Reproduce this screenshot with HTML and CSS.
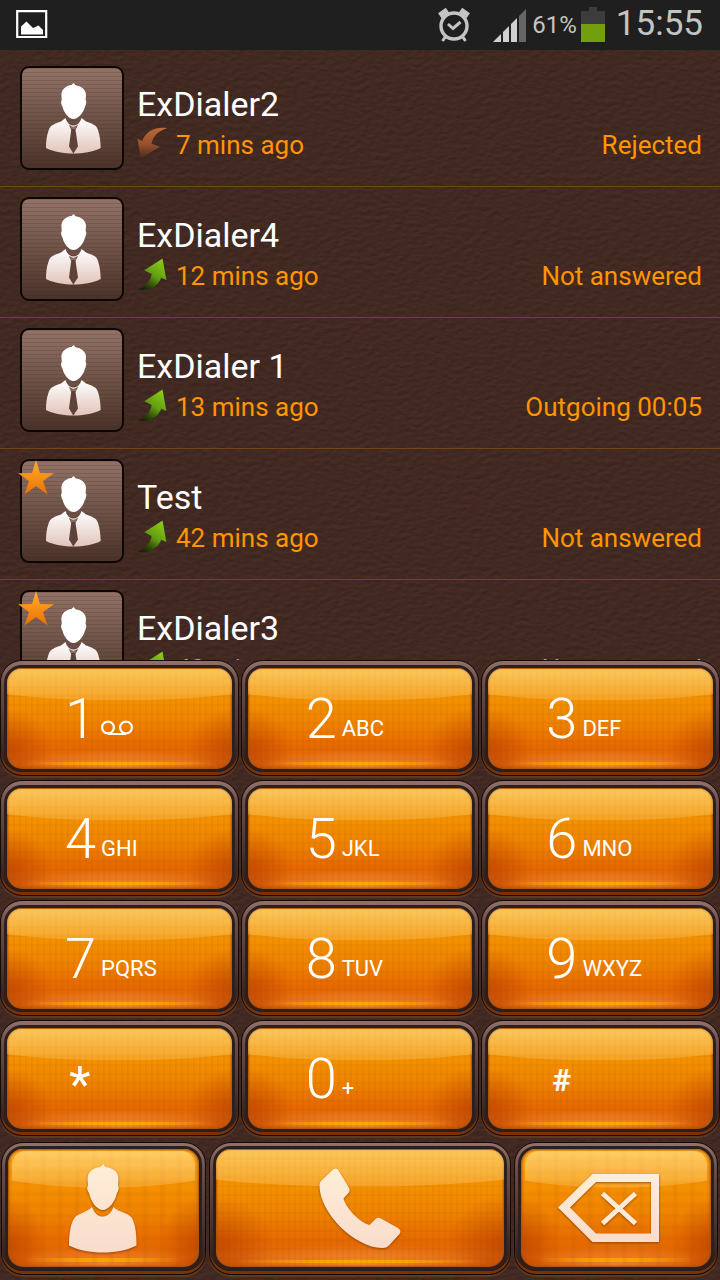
FILE: index.html
```html
<!DOCTYPE html>
<html lang="en">
<head>
<meta charset="utf-8">
<meta name="viewport" content="width=device-width, initial-scale=1">
<title>ExDialer</title>
<link rel="stylesheet" href="styles.css">
</head>
<body>
<svg class="defs" aria-hidden="true">
  <defs>
    <linearGradient id="gShirt" x1="0" y1="0" x2="0" y2="1"><stop offset="0" stop-color="#fff"/><stop offset=".5" stop-color="#fff"/><stop offset="1" stop-color="#e2c4ba"/></linearGradient>
    <linearGradient id="gGreen" x1=".8" y1="0" x2=".2" y2="1"><stop offset="0" stop-color="#8ccc18"/><stop offset=".5" stop-color="#629c12"/><stop offset=".8" stop-color="#2c480a"/><stop offset="1" stop-color="#162006"/></linearGradient>
    <linearGradient id="gRust" x1="0" y1="0" x2="0" y2="1"><stop offset="0" stop-color="#c0683a"/><stop offset=".55" stop-color="#94502c"/><stop offset="1" stop-color="#4e2a1c"/></linearGradient>
    <linearGradient id="gStar" x1="0" y1="0" x2="0" y2="1"><stop offset="0" stop-color="#ffb030"/><stop offset="1" stop-color="#ec7000"/></linearGradient>
    <linearGradient id="gCream" x1="0" y1="0" x2="0" y2="1"><stop offset="0" stop-color="#feeed8"/><stop offset="1" stop-color="#f9dccb"/></linearGradient>
    <symbol id="person" viewBox="0 0 104 104">
      <path fill="url(#gShirt)" d="M53.600 17 L55.500 19.300 C61 20 66 23.500 66 29 L65.600 34 C67 35 66 39 65 40.500 C63.500 47 58 53 53.500 53 C49 53 43.800 47 42.500 40.500 C41.200 39 40.500 35 41.800 34 L41.400 29 C41.300 23.500 46 19.500 51.500 19 Z M45.500 52 C47 57 50 59.500 53.500 59.500 C57 59.500 60 57 61.500 52 L66 55.500 C72 58 76.500 58.500 78 64 C80 70 80.500 76 80.700 82 C73 86 63 87.500 53.500 87.500 C44 87.500 34 86 26 82 C26 76 26.500 70 28.700 64 C30.500 58.500 35 58 41 55.500 Z"/>
      <path fill="#5c4238" d="M49 59 L53.300 61 L58 59 L55.500 64 L58 80.500 L53.300 87.500 L49 80.500 L51.200 64 Z"/>
      <path fill="none" stroke="#c9b2aa" stroke-width=".8" d="M50.500 60 H56.500 M50.500 62 H56"/>
    </symbol>
    <symbol id="outgoing" viewBox="0 0 31 34"><path fill="url(#gGreen)" d="M25.500 1.500 L29.400 23 L24.300 20.700 C21 29 12 35 .5 32.300 C8 30.500 13 25 14.700 17 L7.300 13.200 Z"/></symbol>
    <symbol id="incoming" viewBox="0 0 31 34"><path fill="url(#gRust)" d="M4 32.300 L.3 12.500 L5.200 15 C9 5 19 .5 30.300 2.200 C22 4.500 16.500 9 14.500 17.800 L23 20.800 Z"/></symbol>
    <symbol id="star" viewBox="0 0 36 35"><path fill="url(#gStar)" d="M18 0 L22 13 L36 13.200 L25 21 L29.500 34.500 L18 26 L6.500 34.500 L11 21 L0 13.200 L14 13 Z"/></symbol>
  </defs>
</svg>

<div class="screen">
  <header class="status">
    <svg class="status-picture" width="32" height="30" viewBox="0 0 32 30"><path fill="none" stroke="#fff" stroke-width="2.200" d="M1.200 2.200H30.200V28H1.200Z"/><path fill="#fff" d="M5 25.500V17.500L10.500 12.500L17 19L22.500 16.500L27 21V25.500Z"/></svg>
    <svg class="alarm" width="34" height="36" viewBox="0 0 34 36"><g fill="none" stroke="#c4c4c4"><circle cx="17" cy="19" r="13" stroke-width="3.400"/><path stroke-width="3" d="M11 17L16 21.500L23.500 15"/><path stroke-width="6" d="M2.800 8.700L10.500 3.300M31.200 8.700L23.500 3.300"/><path stroke-width="3" d="M8.500 29.500L5.500 34M25.500 29.500L28.500 34"/></g></svg>
    <svg class="signal" width="34" height="34" viewBox="0 0 34 34"><path fill="#d0d0d0" d="M0 33L8 25V33ZM10 23L16 17V33H10ZM18 15L24 9V33H18Z"/><path fill="#666" d="M26 7L33 0V33H26Z"/></svg>
    <span class="percent">61%</span>
    <svg class="battery" width="24" height="35" viewBox="0 0 24 35"><path fill="#3c3c3c" d="M0 4H8V0H16V4H24V17H0Z"/><path fill="#749f0c" d="M0 17H24V35H0Z"/></svg>
    <time class="clock">15:55</time>
  </header>

  <main class="calls">
    <ul class="call-list">
      <li class="call">
        <div class="avatar"><svg class="avatar-pic"><use href="#person"/></svg></div>
        <div class="info"><div class="name">ExDialer2</div><div class="detail"><svg class="dir"><use href="#incoming"/></svg><span class="ago">7 mins ago</span><span class="result">Rejected</span></div></div>
      </li>
      <li class="call">
        <div class="avatar"><svg class="avatar-pic"><use href="#person"/></svg></div>
        <div class="info"><div class="name">ExDialer4</div><div class="detail"><svg class="dir"><use href="#outgoing"/></svg><span class="ago">12 mins ago</span><span class="result">Not answered</span></div></div>
      </li>
      <li class="call">
        <div class="avatar"><svg class="avatar-pic"><use href="#person"/></svg></div>
        <div class="info"><div class="name">ExDialer 1</div><div class="detail"><svg class="dir"><use href="#outgoing"/></svg><span class="ago">13 mins ago</span><span class="result">Outgoing 00:05</span></div></div>
      </li>
      <li class="call">
        <div class="avatar"><svg class="avatar-pic"><use href="#person"/></svg><svg class="fav"><use href="#star"/></svg></div>
        <div class="info"><div class="name">Test</div><div class="detail"><svg class="dir"><use href="#outgoing"/></svg><span class="ago">42 mins ago</span><span class="result">Not answered</span></div></div>
      </li>
      <li class="call">
        <div class="avatar"><svg class="avatar-pic"><use href="#person"/></svg><svg class="fav"><use href="#star"/></svg></div>
        <div class="info"><div class="name">ExDialer3</div><div class="detail"><svg class="dir"><use href="#outgoing"/></svg><span class="ago">42 mins ago</span><span class="result">Not answered</span></div></div>
      </li>
    </ul>
  </main>

  <section class="dialpad" aria-label="Dial pad">
    <div class="digits">
      <button class="key"><span class="face"><span class="digit">1</span><svg class="voicemail" width="32" height="36" viewBox="0 0 32 36" role="img" aria-label="Voicemail"><g fill="none" stroke="#fff" stroke-width="2.200"><circle cx="7" cy="18.500" r="5.900"/><circle cx="25" cy="18.500" r="5.900"/><path d="M7 25H25"/></g></svg></span></button>
      <button class="key"><span class="face"><span class="digit">2</span><span class="letters">ABC</span></span></button>
      <button class="key"><span class="face"><span class="digit">3</span><span class="letters">DEF</span></span></button>
      <button class="key"><span class="face"><span class="digit">4</span><span class="letters">GHI</span></span></button>
      <button class="key"><span class="face"><span class="digit">5</span><span class="letters">JKL</span></span></button>
      <button class="key"><span class="face"><span class="digit">6</span><span class="letters">MNO</span></span></button>
      <button class="key"><span class="face"><span class="digit">7</span><span class="letters">PQRS</span></span></button>
      <button class="key"><span class="face"><span class="digit">8</span><span class="letters">TUV</span></span></button>
      <button class="key"><span class="face"><span class="digit">9</span><span class="letters">WXYZ</span></span></button>
      <button class="key"><span class="face"><span class="asterisk">*</span></span></button>
      <button class="key"><span class="face"><span class="digit">0</span><span class="letters">+</span></span></button>
      <button class="key"><span class="face"><span class="hash">#</span></span></button>
    </div>
    <div class="actions">
      <button class="key action" aria-label="Contacts"><span class="face wide-grid">
        <svg class="glyph" width="70" height="90" viewBox="0 0 70 90"><path fill="url(#gCream)" d="M35.200 0 L37.500 3 C45 4 50.500 8 50.500 14.500 L50 22 C51.500 23 50.500 27 49 29 C47 38 40.500 46 34.800 46 C29 46 23 38 21 29 C19.500 27 18.500 23 20 22 L19.500 14.500 C19.500 8 25 4 32 3 Z M24 43 C27 50.500 30.500 52.500 34.500 52.500 C38.500 52.500 42.500 50.500 45.500 43 C52 49 59 48 64 54 C68 62 68.500 72 68.500 81.500 C60 86 48 88.500 35 88.500 C22 88.500 9.500 86 1 81.500 C1 72 2 60 6.500 54 C10 49 18 49 24 43 Z"/></svg>
      </span></button>
      <button class="key action" aria-label="Call"><span class="face">
        <svg class="glyph" width="82" height="88" viewBox="0 0 82 88"><path fill="url(#gCream)" d="M14.500 4 Q18 2.500 20 6 L30 23 Q31.500 26 29 28.500 L24.500 33.500 C27 43 40 57 50.500 60 L56.500 54 Q59 52 62 53.500 L79 63 Q83 65.500 80.500 69 L70 80.500 Q67.500 83.200 63 83 C36 83 0 48 .5 20 Q.5 17.500 2.500 15.500 Z"/></svg>
      </span></button>
      <button class="key action" aria-label="Delete"><span class="face wide-grid">
        <svg class="glyph delete" width="102" height="90" viewBox="0 0 102 90"><path fill="url(#gCream)" fill-rule="evenodd" d="M0 43.500 L34.500 10 H101 V78 H34.500 Z M12 43.500 L38 69.500 H93 V18 H38 Z"/><path fill="none" stroke="#fdebd6" stroke-width="5" d="M44.500 29.500 L77.500 59.500 M77.500 29.500 L44.500 59.500"/></svg>
      </span></button>
    </div>
  </section>
</div>
</body>
</html>
```
FILE: styles.css
```css
* { box-sizing: border-box; }

body {
  margin: 0;
  font-family: Roboto, "Noto Sans", sans-serif;
  background: #432a22;
}

.defs { position: absolute; width: 0; height: 0; }

.screen {
  display: flex;
  flex-direction: column;
  height: 100vh;
  overflow: hidden;
  background-color: #432a22;
  background-image: url("data:image/svg+xml,%3Csvg xmlns='http://www.w3.org/2000/svg' width='360' height='360'%3E%3Cfilter id='l' x='0' y='0' width='100%25' height='100%25' color-interpolation-filters='sRGB'%3E%3CfeTurbulence type='fractalNoise' baseFrequency='.14 .24' numOctaves='3' seed='4' stitchTiles='stitch' result='n'/%3E%3CfeDiffuseLighting in='n' surfaceScale='.55' diffuseConstant='1' lighting-color='rgb(77,49,40)'%3E%3CfeDistantLight azimuth='250' elevation='58'/%3E%3C/feDiffuseLighting%3E%3C/filter%3E%3Crect width='360' height='360' filter='url(%23l)'/%3E%3C/svg%3E");
}

/* status bar */
.status {
  display: flex;
  align-items: flex-start;
  justify-content: flex-end;
  flex: none;
  height: 50px;
  padding: 7px 17px 0;
  background: #1f1f1f;
  color: #c4c4c4;
}
.status-picture { margin: 2px auto 0 -1px; }
.alarm { margin-right: 22px; }
.signal { margin: 2px 5px 0 0; }
.percent { font-size: 24px; line-height: 36px; margin-right: 4px; }
.clock { font-size: 35px; line-height: 34px; margin-left: 11px; }

/* call log */
.calls { flex: 1; min-height: 0; overflow: hidden; }
.call-list { list-style: none; margin: 0; padding: 6px 0 0; }
.call {
  display: flex;
  gap: 13px;
  padding: 10px 18px 16px 20px;
  border-bottom: 1px solid #744316;
}
.avatar {
  position: relative;
  flex: none;
  width: 104px;
  height: 104px;
  border: 2px solid #0c0605;
  border-radius: 9px;
  background:
    repeating-linear-gradient(rgba(60, 30, 20, .16) 0 1px, transparent 1px 4px),
    linear-gradient(#927266, #4a3229);
}
.avatar-pic { display: block; width: 104px; height: 104px; margin: -2px; }
.fav { position: absolute; left: -4px; top: -1px; width: 36px; height: 35px; }
.info { flex: 1; min-width: 0; padding-top: 18px; }
.name { color: #fff; font-size: 34px; line-height: 40px; }
.detail {
  display: flex;
  align-items: flex-start;
  margin-top: 2px;
  color: #ff9500;
  font-size: 26px;
  line-height: 38px;
}
.dir { flex: none; width: 31px; height: 34px; margin-right: 8px; }
.result { margin-left: auto; }

/* dial pad */
.dialpad { flex: none; padding-bottom: 5px; }
.digits {
  display: grid;
  grid-template-columns: repeat(3, 1fr);
  grid-auto-rows: 116px;
  gap: 4px 2px;
}
.actions {
  display: grid;
  grid-template-columns: 205fr 303fr 204fr;
  grid-auto-rows: 133px;
  gap: 3px;
  margin-top: 6px;
  padding: 0 2px 0 1px;
}
.key {
  display: flex;
  min-width: 0;
  padding: 7px 6px 6px;
  border: 1px solid #150a08;
  border-radius: 22px;
  background: linear-gradient(#92716a, #6a4d48 20%, #4c3430 60%, #2a1815);
  box-shadow: inset 0 -3px 0 #7c3200, 0 2px 1px #5c3c29;
  color: #fff;
  font-family: inherit;
  text-align: left;
  cursor: pointer;
}
.face {
  position: relative;
  display: flex;
  flex: 1;
  align-items: flex-start;
  gap: 5px;
  min-width: 0;
  padding: 23px 0 0 58px;
  overflow: hidden;
  border-radius: 15px;
  background:
    repeating-linear-gradient(90deg, rgba(120, 60, 0, .06) 0 2px, transparent 2px 6px),
    repeating-linear-gradient(rgba(120, 60, 0, .05) 0 2px, transparent 2px 9px),
    linear-gradient(90deg, transparent 8%, #f9a800 38%, #f9a800 62%, transparent 92%) 0 calc(100% - 4px) / 100% 3px no-repeat,
    radial-gradient(ellipse 45% 16% at 50% 97%, rgba(244, 140, 56, .9), transparent),
    radial-gradient(ellipse 20% 42% at 0 82%, rgba(176, 56, 0, .6), transparent),
    radial-gradient(ellipse 20% 42% at 100% 82%, rgba(176, 56, 0, .6), transparent),
    linear-gradient(#f79a08, #f49000 32%, #ee8200 55%, #e56800 78%, #e46c10 92%, #d65a00);
  box-shadow: 0 0 0 3px #2c1f1e, inset 0 0 2px 1px #a55510;
}
.face::before {
  content: "";
  position: absolute;
  inset: 1px 0 auto;
  height: 31%;
  border-radius: 14px 14px 0 0;
  background: linear-gradient(rgba(255, 225, 140, .62), rgba(255, 205, 120, .3));
  clip-path: ellipse(85% 100% at 50% 0);
}
.digit, .letters, .voicemail, .asterisk, .hash { z-index: 1; }
.digit { font-size: 56px; font-weight: 300; line-height: 56px; }
.letters { margin-top: 20px; font-size: 22px; line-height: 36px; }
.voicemail { margin-top: 18px; }
.asterisk { padding: 6px 0 0 4px; font-size: 50px; line-height: 56px; }
.hash { padding: 11px 0 0 6px; font-size: 32px; font-weight: 700; line-height: 36px; }

.action { padding: 6px 6px 7px; }
.action .face { align-items: center; justify-content: center; padding: 1px 0 0; }
.wide-grid::before { inset: 2px 4px auto; }
.wide-grid {
  background:
    repeating-linear-gradient(90deg, rgba(150, 70, 0, .08) 0 2px, transparent 5px 15px, rgba(150, 70, 0, .08) 17px),
    repeating-linear-gradient(rgba(150, 70, 0, .06) 0 2px, transparent 4px 9px, rgba(150, 70, 0, .06) 11px),
    linear-gradient(90deg, transparent 8%, #f9a800 38%, #f9a800 62%, transparent 92%) 0 calc(100% - 5px) / 100% 4px no-repeat,
    radial-gradient(ellipse 48% 16% at 50% 97%, rgba(244, 130, 56, .9), transparent),
    radial-gradient(ellipse 20% 42% at 0 82%, rgba(176, 56, 0, .6), transparent),
    radial-gradient(ellipse 20% 42% at 100% 82%, rgba(176, 56, 0, .6), transparent),
    linear-gradient(#ffac20, #f59000 32%, #f08200 55%, #e66a00 78%, #e46804 92%, #d05400);
}
.glyph { position: relative; filter: drop-shadow(0 1px 1px rgba(120, 50, 0, .7)); }
.delete { margin-right: 15px; }
```
